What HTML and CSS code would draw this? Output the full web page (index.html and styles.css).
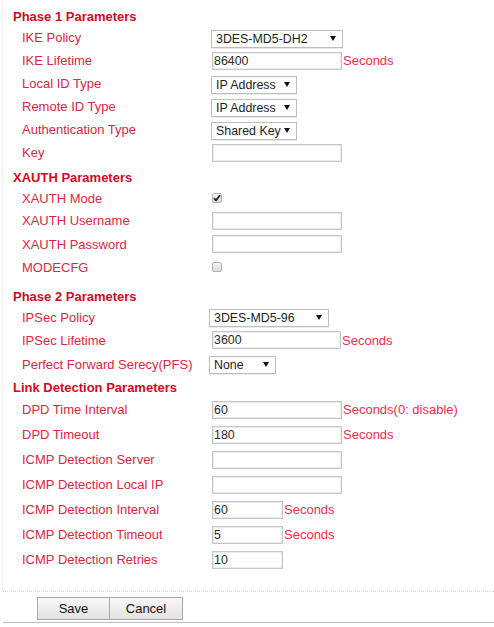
FILE: index.html
```html
<!DOCTYPE html>
<html>
<head>
<meta charset="utf-8">
<link rel="stylesheet" href="styles.css">
</head>
<body>
<div class="page">
  <section class="sec sec1">
    <h3 class="head">Phase 1 Parameters</h3>
    <div class="row r23"><span class="lbl">IKE Policy</span><span class="ctl"><span class="selwrap w132"><select class="sel"><option>3DES-MD5-DH2</option></select></span></span></div>
    <div class="row r23"><span class="lbl">IKE Lifetime</span><span class="ctl"><input class="inp w130" value="86400"><span class="unit">Seconds</span></span></div>
    <div class="row r23"><span class="lbl">Local ID Type</span><span class="ctl"><span class="selwrap w86"><select class="sel"><option>IP Address</option></select></span></span></div>
    <div class="row r23"><span class="lbl">Remote ID Type</span><span class="ctl"><span class="selwrap w86"><select class="sel"><option>IP Address</option></select></span></span></div>
    <div class="row r23"><span class="lbl">Authentication Type</span><span class="ctl"><span class="selwrap w86"><select class="sel"><option>Shared Key</option></select></span></span></div>
    <div class="row r23"><span class="lbl">Key</span><span class="ctl"><input class="inp w130" value=""></span></div>
  </section>

  <section class="sec sec2">
    <h3 class="head">XAUTH Parameters</h3>
    <div class="row r22"><span class="lbl">XAUTH Mode</span><span class="ctl"><span class="chk"><svg width="8" height="8" viewBox="0 0 8 8"><path d="M1 4.2 L3 6.3 L7 1.2" fill="none" stroke="#222" stroke-width="1.8"/></svg></span></span></div>
    <div class="row r23"><span class="lbl">XAUTH Username</span><span class="ctl"><input class="inp w130" value=""></span></div>
    <div class="row r24"><span class="lbl">XAUTH Password</span><span class="ctl"><input class="inp w130" type="password" value=""></span></div>
    <div class="row r22"><span class="lbl">MODECFG</span><span class="ctl"><span class="chk"></span></span></div>
  </section>

  <section class="sec sec3">
    <h3 class="head">Phase 2 Parameters</h3>
    <div class="row r22"><span class="lbl">IPSec Policy</span><span class="ctl shift"><span class="selwrap w120"><select class="sel"><option>3DES-MD5-96</option></select></span></span></div>
    <div class="row r24"><span class="lbl">IPSec Lifetime</span><span class="ctl"><input class="inp w129" value="3600"><span class="unit">Seconds</span></span></div>
    <div class="row r24"><span class="lbl">Perfect Forward Serecy(PFS)</span><span class="ctl shift"><span class="selwrap w67"><select class="sel"><option>None</option></select></span></span></div>
  </section>

  <section class="sec sec4">
    <h3 class="head">Link Detection Parameters</h3>
    <div class="row r25"><span class="lbl">DPD Time Interval</span><span class="ctl"><input class="inp w130" value="60"><span class="unit">Seconds(0: disable)</span></span></div>
    <div class="row r25"><span class="lbl">DPD Timeout</span><span class="ctl"><input class="inp w130" value="180"><span class="unit">Seconds</span></span></div>
    <div class="row r25"><span class="lbl">ICMP Detection Server</span><span class="ctl"><input class="inp w130" value=""></span></div>
    <div class="row r25"><span class="lbl">ICMP Detection Local IP</span><span class="ctl"><input class="inp w130" value=""></span></div>
    <div class="row r25"><span class="lbl">ICMP Detection Interval</span><span class="ctl"><input class="inp w71" value="60"><span class="unit">Seconds</span></span></div>
    <div class="row r25"><span class="lbl">ICMP Detection Timeout</span><span class="ctl"><input class="inp w71" value="5"><span class="unit">Seconds</span></span></div>
    <div class="row r25"><span class="lbl">ICMP Detection Retries</span><span class="ctl"><input class="inp w71" value="10"></span></div>
  </section>
</div>
<div class="actions">
  <button class="btn">Save</button><button class="btn">Cancel</button>
</div>
</body>
</html>
```

FILE: styles.css
```css
html, body {
  margin: 0;
  padding: 0;
  background: #fff;
}
body {
  font-family: "Liberation Sans", Arial, sans-serif;
  width: 494px;
  height: 627px;
  overflow: hidden;
}
.page {
  box-sizing: border-box;
  margin-left: 2px;
  border-left: 1px solid #f2f2f2;
  padding-top: 8px;
  height: 592px;
  border-bottom: 1px dotted #d6d6d6;
}
.sec {
  display: flex;
  flex-direction: column;
}
.head {
  margin: 0;
  padding-left: 10px;
  height: 18px;
  line-height: 18px;
  font-size: 13px;
  font-weight: bold;
  color: #cf0a24;
}
.sec2 { margin-top: 5px; }
.sec3 { margin-top: 10px; }
.sec4 { margin-top: 3px; }
.row {
  display: grid;
  grid-template-columns: 189px 1fr;
  align-items: center;
  padding-left: 19px;
}
.r22 { height: 22px; }
.r23 { height: 23px; }
.r24 { height: 24px; }
.r25 { height: 25px; }
.lbl {
  font-size: 13px;
  color: #d8283f;
  white-space: nowrap;
}
.ctl {
  display: flex;
  align-items: center;
}
.ctl.shift { margin-left: -2px; }
.unit {
  font-size: 13px;
  color: #e8304c;
  margin-left: 1px;
  white-space: nowrap;
}
.inp {
  box-sizing: border-box;
  height: 18px;
  margin: 0 0 0 1px;
  padding: 0 1px;
  border: 1px solid #c6c6c6;
  box-shadow: inset 0 0 0 1px #ececec;
  font-family: "Liberation Sans", Arial, sans-serif;
  font-size: 12.4px;
  color: #2a2a2a;
  background: #fff;
  outline: none;
}
.w130 { width: 130px; }
.w129 { width: 129px; }
.w71 { width: 71px; }
.selwrap {
  position: relative;
  display: inline-block;
  height: 18px;
}
.selwrap::after {
  content: "";
  position: absolute;
  right: 7px;
  top: 7px;
  border-left: 3px solid transparent;
  border-right: 3px solid transparent;
  border-top: 5px solid #111;
  pointer-events: none;
}
.w132 { width: 132px; }
.w120 { width: 120px; }
.w86 { width: 86px; }
.w67 { width: 67px; }
.sel {
  -webkit-appearance: none;
  appearance: none;
  box-sizing: border-box;
  width: 100%;
  height: 18px;
  margin: 0;
  padding: 0 4px;
  border: 1px solid #bdbdbd;
  box-shadow: 0 1px 0 #ececec;
  border-radius: 0;
  background: #fff;
  font-family: "Liberation Sans", Arial, sans-serif;
  font-size: 12.4px;
  color: #1e1e1e;
  line-height: 16px;
  outline: none;
}
.chk {
  box-sizing: border-box;
  width: 10px;
  height: 10px;
  margin-left: 1px;
  border: 1px solid #b2b2b2;
  border-radius: 2px;
  background: linear-gradient(#f4f4f4, #dcdcdc);
  display: flex;
  align-items: center;
  justify-content: center;
}
.chk svg { display: block; }
.actions {
  box-sizing: border-box;
  display: flex;
  margin-left: 3px;
  height: 31px;
  padding: 5px 0 0 34px;
  border-bottom: 1px solid #bdbdbd;
}
.btn {
  box-sizing: border-box;
  width: 73px;
  height: 23px;
  margin: 0;
  padding: 0;
  border: 1px solid #a8a8a8;
  border-radius: 0;
  background: linear-gradient(#f8f8f8, #e2e2e2);
  font-family: "Liberation Sans", Arial, sans-serif;
  font-size: 13px;
  color: #111;
}
.btn + .btn { margin-left: -1px; width: 74px; }
```
